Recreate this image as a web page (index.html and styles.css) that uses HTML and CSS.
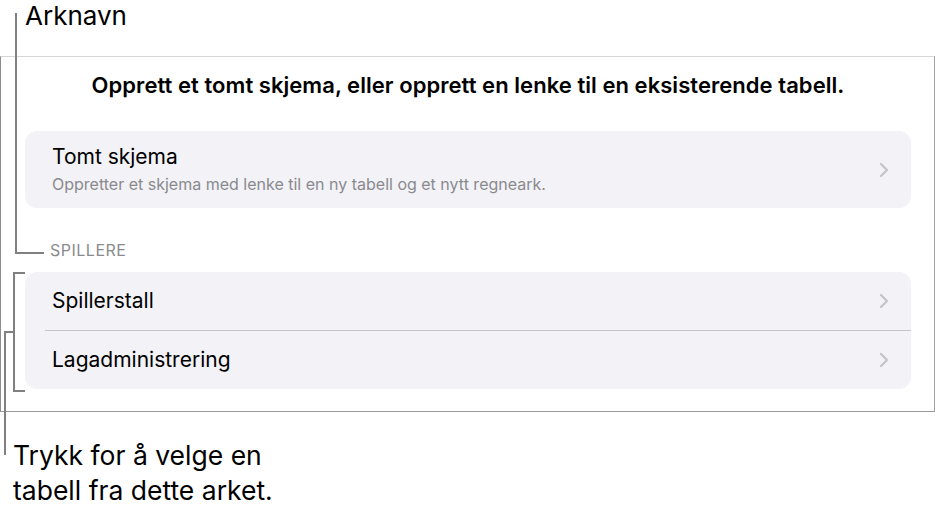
FILE: index.html
```html
<!DOCTYPE html>
<html lang="no">
<head>
<meta charset="utf-8">
<title>Arknavn</title>
<link rel="stylesheet" href="styles.css">
</head>
<body>
<div class="page">
  <div class="label-top">Arknavn</div>
  <div class="frame">
    <h1 class="heading">Opprett et tomt skjema, eller opprett en lenke til en eksisterende tabell.</h1>
    <div class="card">
      <div class="row row-tall">
        <div class="row-text">
          <div class="row-title">Tomt skjema</div>
          <div class="row-sub">Oppretter et skjema med lenke til en ny tabell og et nytt regneark.</div>
        </div>
        <svg class="chev" width="10" height="16" viewBox="0 0 10 16"><polyline points="2,2 8,8 2,14" fill="none" stroke="#c4c4c7" stroke-width="2.2" stroke-linecap="round" stroke-linejoin="round"/></svg>
      </div>
    </div>
    <div class="section-label">SPILLERE</div>
    <div class="card">
      <div class="row">
        <div class="row-title">Spillerstall</div>
        <svg class="chev" width="10" height="16" viewBox="0 0 10 16"><polyline points="2,2 8,8 2,14" fill="none" stroke="#c4c4c7" stroke-width="2.2" stroke-linecap="round" stroke-linejoin="round"/></svg>
      </div>
      <div class="sep"></div>
      <div class="row">
        <div class="row-title">Lagadministrering</div>
        <svg class="chev" width="10" height="16" viewBox="0 0 10 16"><polyline points="2,2 8,8 2,14" fill="none" stroke="#c4c4c7" stroke-width="2.2" stroke-linecap="round" stroke-linejoin="round"/></svg>
      </div>
    </div>
  </div>
  <div class="caption">Trykk for å velge en<br>tabell fra dette arket.</div>

  <div class="line l1v"></div>
  <div class="line l1h"></div>
  <div class="line brv"></div>
  <div class="line brt"></div>
  <div class="line brb"></div>
  <div class="line l2h"></div>
  <div class="line l2v"></div>
</div>
</body>
</html>
```

FILE: styles.css
```css
html, body {
  margin: 0;
  padding: 0;
  background: #ffffff;
}
body {
  font-family: Inter, "Noto Sans", sans-serif;
  color: #000;
}
.page {
  position: relative;
  width: 935px;
  height: 513px;
  overflow: hidden;
}
.label-top {
  height: 56px;
  padding-left: 25px;
  box-sizing: border-box;
  font-size: 26px;
  line-height: 32px;
}
.frame {
  width: 935px;
  height: 356px;
  box-sizing: border-box;
  border: 1px solid;
  border-color: #d6d6d6 #a0a0a0 #9a9a9a #8c8c8c;
  padding: 15px 23px 0 24px;
  display: flex;
  flex-direction: column;
}
.heading {
  margin: 0;
  font-size: 22px;
  font-weight: 600;
  line-height: 26px;
  text-align: center;
  letter-spacing: 0.05px;
}
.card {
  background: #f2f2f7;
  border-radius: 12px;
  display: flex;
  flex-direction: column;
}
.heading + .card {
  margin-top: 33px;
}
.row {
  height: 58px;
  display: flex;
  align-items: center;
  justify-content: space-between;
  padding: 0 22px 0 27px;
}
.row-tall {
  height: 77px;
}
.row-text {
  display: flex;
  flex-direction: column;
  gap: 6px;
}
.row-title {
  font-size: 21px;
  line-height: 24px;
}
.row-sub {
  font-size: 16px;
  line-height: 19px;
  color: #8a8a8e;
}
.sep {
  height: 1px;
  background: #c6c6c8;
  margin-left: 20px;
}
.section-label {
  margin: 33px 0 12px 25px;
  font-size: 16px;
  line-height: 19px;
  letter-spacing: 0.5px;
  color: #8a8a8e;
}
.caption {
  padding: 26px 0 0 13px;
  font-size: 26.5px;
  line-height: 35px;
}
.line {
  position: absolute;
  background: #808080;
}
.l1v { left: 15px; top: 13px; width: 2px; height: 241px; }
.l1h { left: 15px; top: 252px; width: 29px; height: 2px; }
.brv { left: 13px; top: 272px; width: 2px; height: 120px; }
.brt { left: 13px; top: 272px; width: 12px; height: 2px; }
.brb { left: 13px; top: 390px; width: 12px; height: 2px; }
.l2h { left: 4px; top: 331px; width: 10px; height: 2px; }
.l2v { left: 4px; top: 331px; width: 2px; height: 124px; }
```
